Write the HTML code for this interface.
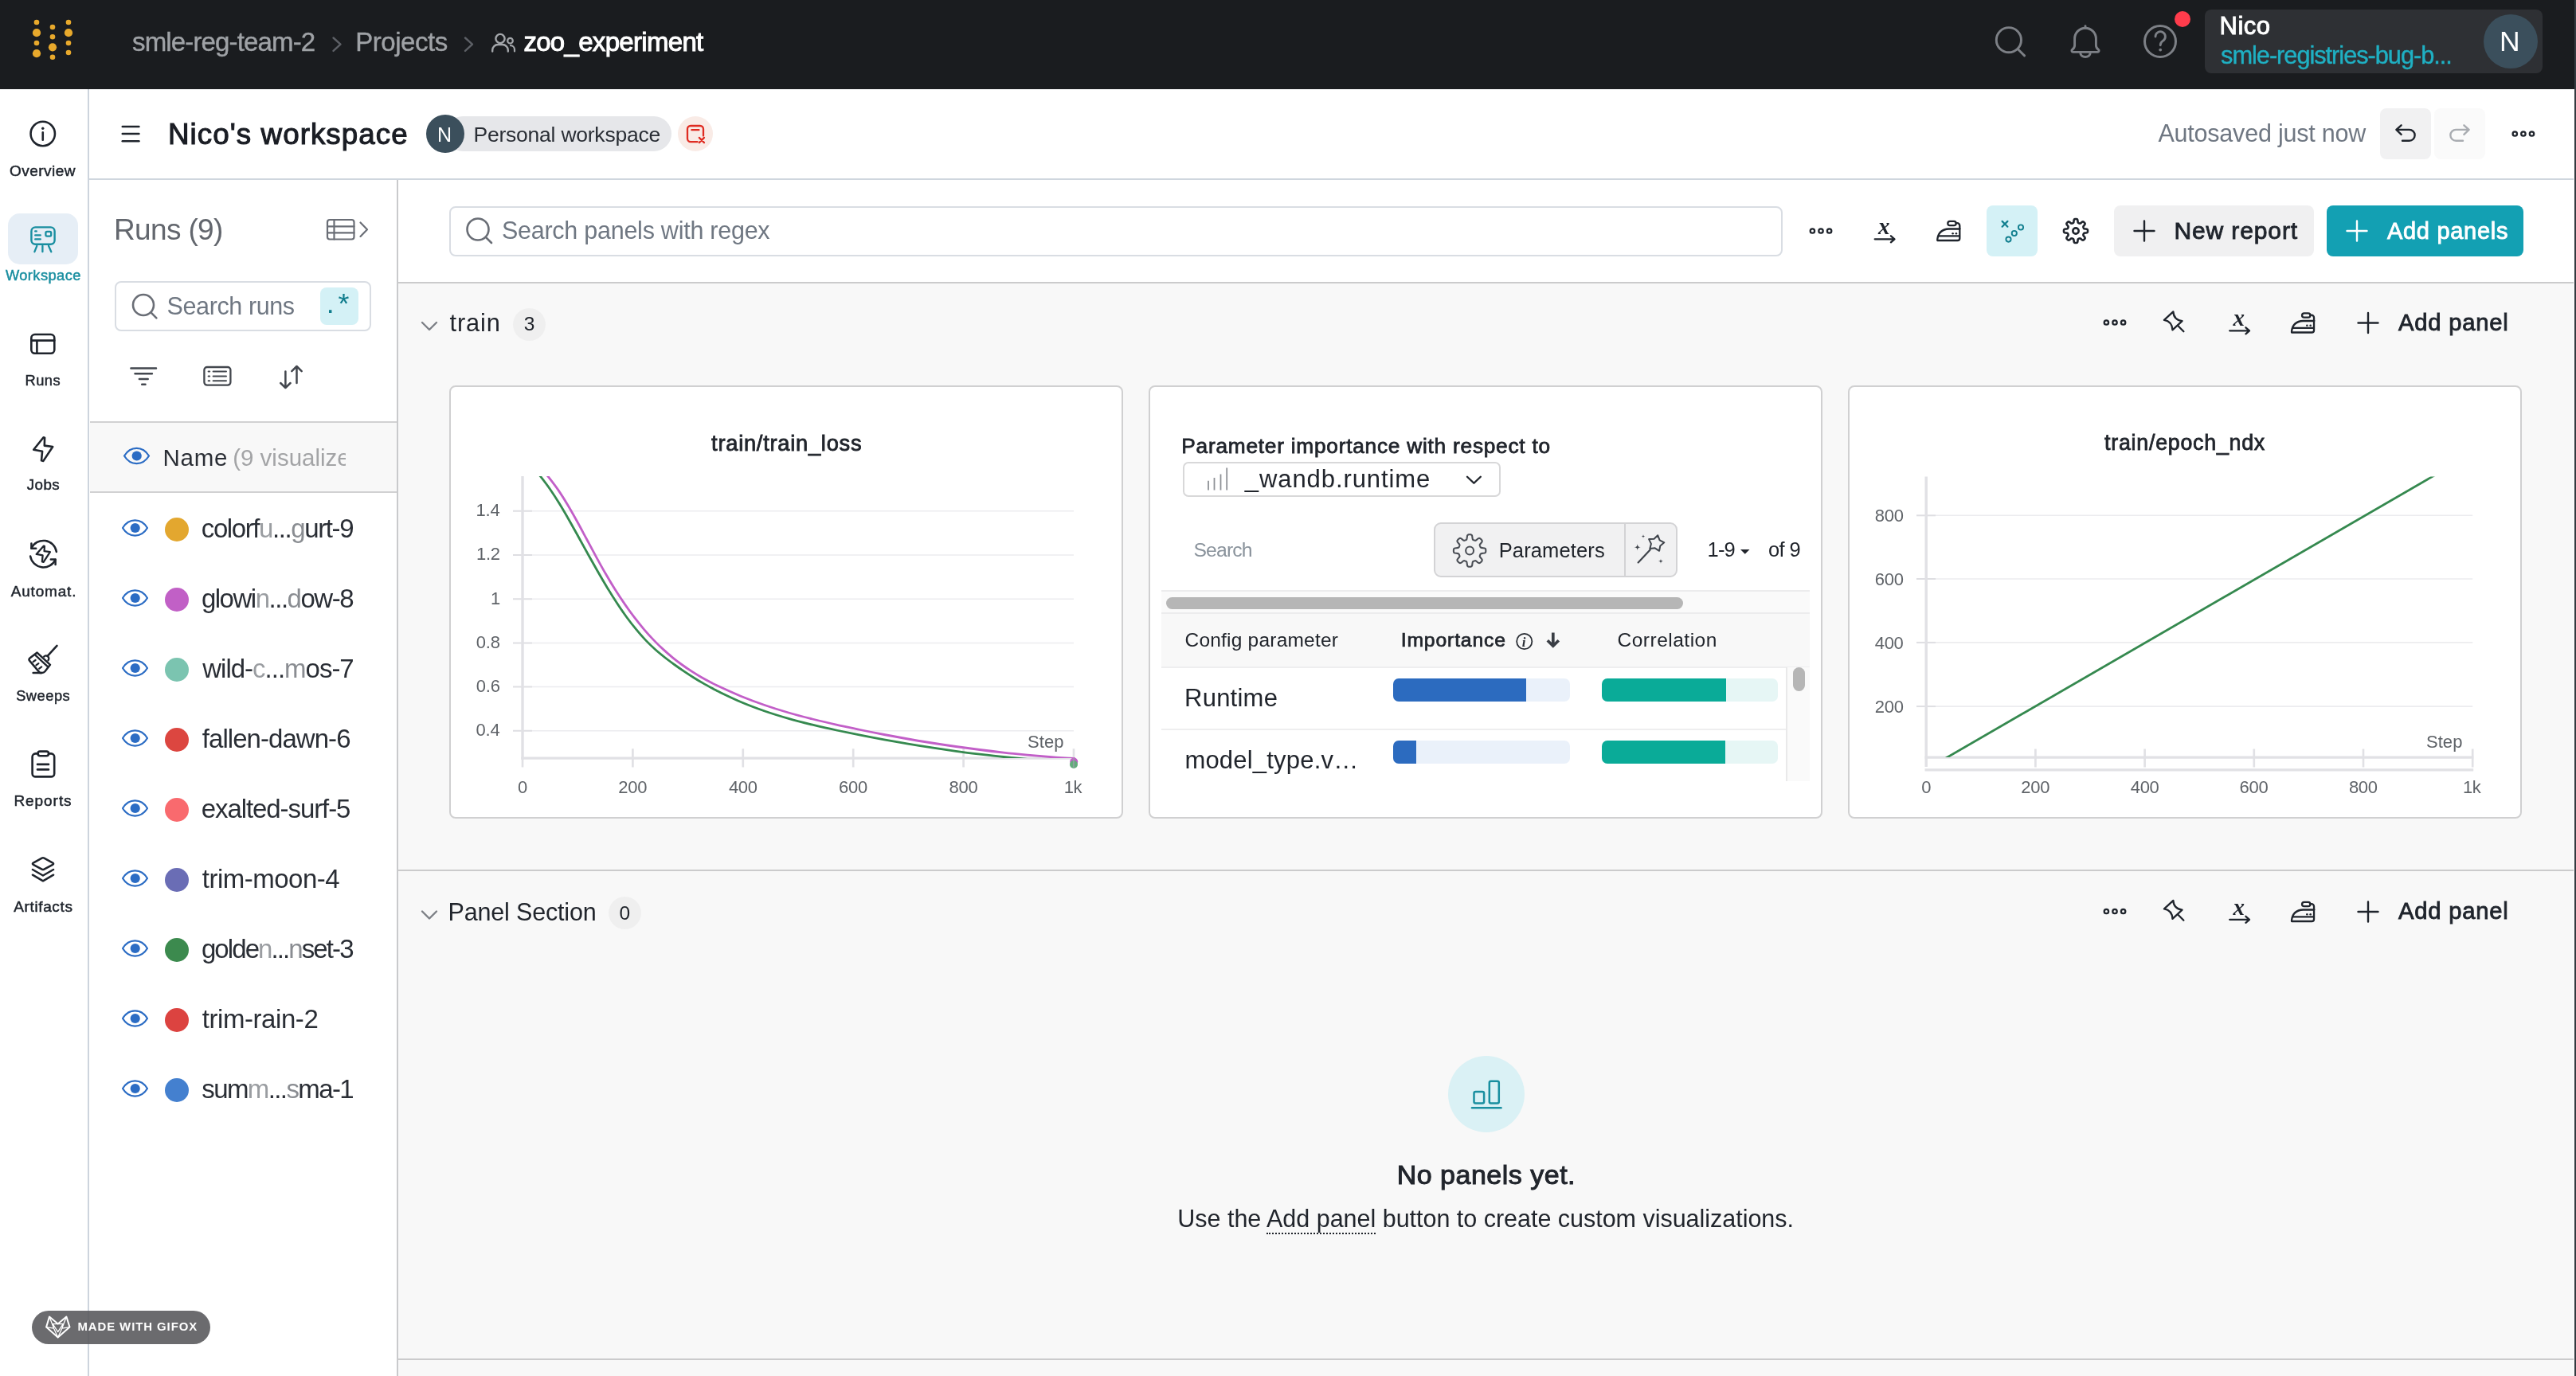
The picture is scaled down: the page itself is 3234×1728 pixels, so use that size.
<!DOCTYPE html>
<html lang="en"><head><meta charset="utf-8"><title>zoo_experiment | Nico's workspace</title>
<style>
html,body{margin:0;padding:0;}
body{width:3234px;height:1728px;position:relative;overflow:hidden;background:#fff;
font-family:"Liberation Sans",sans-serif;color:#21252c;}
.b{position:absolute;box-sizing:border-box;}
.t{position:absolute;white-space:nowrap;line-height:1;}
svg{overflow:visible;}
#root{position:absolute;left:0;top:0;width:3234px;height:1728px;will-change:transform;}
</style></head><body><div id="root">
<div class="b" style="left:0px;top:0px;width:3234px;height:111.5px;background:#1a1c1f;"></div>
<div class="b" style="left:110.3px;top:112px;width:1.6px;height:1616px;background:#cdd4dd;"></div>
<div class="b" style="left:112px;top:224px;width:3119px;height:2px;background:#cfd6de;"></div>
<div class="b" style="left:500px;top:355px;width:2731px;height:1373px;background:#f8f8f8;"></div>
<div class="b" style="left:500px;top:354px;width:2731px;height:2px;background:#cbcbcc;"></div>
<div class="b" style="left:500px;top:1092px;width:2731px;height:2px;background:#cbcbcc;"></div>
<div class="b" style="left:500px;top:1706px;width:2731px;height:2px;background:#cbcbcc;"></div>
<div class="b" style="left:498px;top:226px;width:2px;height:1502px;background:#c9cacc;"></div>
<div class="b" style="left:3232px;top:0px;width:2px;height:1728px;background:#343a40;"></div>
<div class="t" style="left:166.1px;top:35.8px;font-size:33px;color:#9fa2a6;letter-spacing:-0.86px;-webkit-text-stroke:0.4px;">smle-reg-team-2</div>
<div class="t" style="left:446.3px;top:35.8px;font-size:33px;color:#9fa2a6;letter-spacing:-0.47px;-webkit-text-stroke:0.4px;">Projects</div>
<div class="t" style="left:657.4px;top:35.8px;font-size:33px;-webkit-text-stroke:0.99px;color:#ffffff;letter-spacing:-0.69px;">zoo_experiment</div>
<div class="b" style="left:2730px;top:14px;width:20px;height:20px;background:#ff3c4c;border-radius:50%;"></div>
<div class="b" style="left:2768px;top:12px;width:424px;height:80px;background:#2e3034;border-radius:8px;"></div>
<div class="t" style="left:2786.5px;top:16.8px;font-size:31px;-webkit-text-stroke:0.93px;color:#ffffff;letter-spacing:0.53px;">Nico</div>
<div class="t" style="left:2788.1px;top:55.2px;font-size:30.75px;color:#1fb0c3;letter-spacing:-1.03px;-webkit-text-stroke:0.4px;">smle-registries-bug-b...</div>
<div class="b" style="left:3118px;top:18px;width:68px;height:68px;background:#3b4f5c;border-radius:50%;"></div>
<div class="t" style="left:3138.1px;top:35.4px;font-size:35.5px;color:#ffffff;">N</div>
<div class="b" style="left:10px;top:268px;width:88px;height:64px;background:#e6eef6;border-radius:15px;"></div>
<div class="t" style="left:12.1px;top:204.9px;font-size:19.0px;-webkit-text-stroke:0.49px;color:#1f242c;letter-spacing:0.45px;">Overview</div>
<div class="t" style="left:6.9px;top:337.1px;font-size:18.25px;-webkit-text-stroke:0.47px;color:#198ea0;letter-spacing:0.45px;">Workspace</div>
<div class="t" style="left:31.5px;top:469.1px;font-size:18.25px;-webkit-text-stroke:0.47px;color:#1f242c;letter-spacing:0.52px;">Runs</div>
<div class="t" style="left:33.7px;top:600.1px;font-size:18.75px;-webkit-text-stroke:0.49px;color:#1f242c;letter-spacing:0.45px;">Jobs</div>
<div class="t" style="left:13.7px;top:732.7px;font-size:19.0px;-webkit-text-stroke:0.49px;color:#1f242c;letter-spacing:0.82px;">Automat.</div>
<div class="t" style="left:20.2px;top:865.1px;font-size:18.25px;-webkit-text-stroke:0.47px;color:#1f242c;letter-spacing:0.51px;">Sweeps</div>
<div class="t" style="left:17.4px;top:996.4px;font-size:19.0px;-webkit-text-stroke:0.49px;color:#1f242c;letter-spacing:0.95px;">Reports</div>
<div class="t" style="left:17.2px;top:1128.5px;font-size:19.0px;-webkit-text-stroke:0.49px;color:#1f242c;letter-spacing:0.64px;">Artifacts</div>
<div class="t" style="left:211.0px;top:150.6px;font-size:36.75px;-webkit-text-stroke:1.10px;color:#1a1d24;letter-spacing:1.06px;">Nico&#x27;s workspace</div>
<div class="b" style="left:559px;top:146px;width:284px;height:44px;background:#e6e7ea;border-radius:22px;"></div>
<div class="b" style="left:535px;top:144px;width:48px;height:48px;background:#3b4f5c;border-radius:50%;"></div>
<div class="t" style="left:548.9px;top:156.8px;font-size:25px;color:#ffffff;">N</div>
<div class="t" style="left:594.6px;top:156.3px;font-size:26.5px;color:#2a2e35;letter-spacing:-0.24px;">Personal workspace</div>
<div class="b" style="left:851.3px;top:146px;width:44px;height:44px;background:#f9ebe6;border-radius:50%;"></div>
<div class="t" style="left:2709.4px;top:152.2px;font-size:30.5px;color:#6f7782;letter-spacing:-0.21px;">Autosaved just now</div>
<div class="b" style="left:2988px;top:136px;width:64px;height:64px;background:#f1f1f2;border-radius:8px;"></div>
<div class="b" style="left:3056px;top:136px;width:64px;height:64px;background:#fafafa;border-radius:8px;"></div>
<div class="t" style="left:143.0px;top:270.2px;font-size:37px;color:#63676e;letter-spacing:-0.65px;">Runs (9)</div>
<div class="b" style="left:144px;top:353px;width:322px;height:63px;background:#ffffff;border:2px solid #d9dde3;border-radius:8px;"></div>
<div class="t" style="left:209.6px;top:368.7px;font-size:30.5px;color:#6f7782;letter-spacing:-0.40px;">Search runs</div>
<div class="b" style="left:402px;top:360.5px;width:47.5px;height:47px;background:#d4f1f6;border-radius:8px;"></div>
<div class="t" style="left:409.7px;top:363.7px;font-size:35.75px;color:#117d8d;letter-spacing:4.98px;">.*</div>
<div class="b" style="left:113px;top:529px;width:385px;height:90px;background:#f8f8f8;border-top:2px solid #d1d1d2;border-bottom:2px solid #d1d1d2;"></div>
<div class="t" style="left:204.6px;top:559.5px;font-size:29.5px;color:#2a2e35;letter-spacing:0.68px;">Name</div>
<div class="b" style="left:290px;top:545px;width:144px;height:60px;overflow:hidden;"><div class="t" style="left:2.2px;top:14.5px;font-size:29.5px;color:#a3a4a6;">(9 visualized)</div>
</div>
<div class="b" style="left:207px;top:650px;width:30px;height:30px;background:#e3a72f;border-radius:50%;"></div>
<div class="t" style="left:252.8px;top:647.1px;font-size:33px;color:#2a2e35;letter-spacing:-1.40px;">colorf<span style="color:#9a9da1">u</span>...<span style="color:#8a8d92">g</span>urt-9</div>
<div class="b" style="left:207px;top:738px;width:30px;height:30px;background:#c160c6;border-radius:50%;"></div>
<div class="t" style="left:252.9px;top:735.1px;font-size:33px;color:#2a2e35;letter-spacing:-1.49px;">glowi<span style="color:#9a9da1">n</span>...<span style="color:#8a8d92">d</span>ow-8</div>
<div class="b" style="left:207px;top:826px;width:30px;height:30px;background:#7bc4b0;border-radius:50%;"></div>
<div class="t" style="left:254.3px;top:823.1px;font-size:33px;color:#2a2e35;letter-spacing:-1.01px;">wild-<span style="color:#9a9da1">c</span>...<span style="color:#8a8d92">m</span>os-7</div>
<div class="b" style="left:207px;top:914px;width:30px;height:30px;background:#dc4640;border-radius:50%;"></div>
<div class="t" style="left:253.8px;top:911.1px;font-size:33px;color:#2a2e35;letter-spacing:-0.95px;">fallen-dawn-6</div>
<div class="b" style="left:207px;top:1002px;width:30px;height:30px;background:#f96a6e;border-radius:50%;"></div>
<div class="t" style="left:252.8px;top:999.1px;font-size:33px;color:#2a2e35;letter-spacing:-1.09px;">exalted-surf-5</div>
<div class="b" style="left:207px;top:1090px;width:30px;height:30px;background:#6a6db5;border-radius:50%;"></div>
<div class="t" style="left:253.8px;top:1087.1px;font-size:33px;color:#2a2e35;letter-spacing:-0.51px;">trim-moon-4</div>
<div class="b" style="left:207px;top:1178px;width:30px;height:30px;background:#3c8a4e;border-radius:50%;"></div>
<div class="t" style="left:252.9px;top:1175.1px;font-size:33px;color:#2a2e35;letter-spacing:-1.91px;">golde<span style="color:#9a9da1">n</span>...<span style="color:#8a8d92">n</span>set-3</div>
<div class="b" style="left:207px;top:1266px;width:30px;height:30px;background:#dc4340;border-radius:50%;"></div>
<div class="t" style="left:253.8px;top:1263.1px;font-size:33px;color:#2a2e35;letter-spacing:-0.44px;">trim-rain-2</div>
<div class="b" style="left:207px;top:1354px;width:30px;height:30px;background:#4480cf;border-radius:50%;"></div>
<div class="t" style="left:253.3px;top:1351.1px;font-size:33px;color:#2a2e35;letter-spacing:-1.61px;">sum<span style="color:#9a9da1">m</span>...<span style="color:#8a8d92">s</span>ma-1</div>
<div class="b" style="left:564px;top:259px;width:1674px;height:63px;background:#ffffff;border:2px solid #d9dde3;border-radius:8px;"></div>
<div class="t" style="left:629.9px;top:274.2px;font-size:30.5px;color:#6f7782;letter-spacing:-0.25px;">Search panels with regex</div>
<div class="b" style="left:2494px;top:258px;width:64px;height:64px;background:#d4f1f6;border-radius:8px;"></div>
<div class="b" style="left:2654px;top:258px;width:251px;height:64px;background:#f0f0f1;border-radius:8px;"></div>
<div class="t" style="left:2729.5px;top:274.6px;font-size:30.0px;-webkit-text-stroke:0.90px;color:#1f242c;letter-spacing:0.88px;">New report</div>
<div class="b" style="left:2921px;top:258px;width:247px;height:64px;background:#13a0b3;border-radius:8px;"></div>
<div class="t" style="left:2996.9px;top:275.5px;font-size:29px;-webkit-text-stroke:0.87px;color:#ffffff;letter-spacing:0.72px;">Add panels</div>
<div class="t" style="left:564.5px;top:390.6px;font-size:30.75px;color:#21252c;letter-spacing:0.91px;">train</div>
<div class="b" style="left:644.25px;top:386.5px;width:41px;height:41px;background:#efefef;border-radius:50%;"></div>
<div class="t" style="left:657.8px;top:395.3px;font-size:24.5px;color:#21252c;">3</div>
<div class="t" style="left:3010.9px;top:390.7px;font-size:29.25px;-webkit-text-stroke:0.88px;color:#1f242c;letter-spacing:0.78px;">Add panel</div>
<div class="t" style="left:562.5px;top:1130.3px;font-size:30.5px;color:#21252c;letter-spacing:-0.17px;">Panel Section</div>
<div class="b" style="left:764.1px;top:1126.0px;width:41px;height:41px;background:#efefef;border-radius:50%;"></div>
<div class="t" style="left:777.6px;top:1134.8px;font-size:24.5px;color:#21252c;">0</div>
<div class="t" style="left:3010.9px;top:1130.2px;font-size:29.25px;-webkit-text-stroke:0.88px;color:#1f242c;letter-spacing:0.78px;">Add panel</div>
<div class="b" style="left:564px;top:484px;width:846px;height:544px;background:#ffffff;border:2px solid #d0d0d1;border-radius:8px;"></div>
<div class="b" style="left:1442px;top:484px;width:846px;height:544px;background:#ffffff;border:2px solid #d0d0d1;border-radius:8px;"></div>
<div class="b" style="left:2320px;top:484px;width:846px;height:544px;background:#ffffff;border:2px solid #d0d0d1;border-radius:8px;"></div>
<div class="t" style="left:893.1px;top:542.9px;font-size:27.25px;-webkit-text-stroke:0.82px;color:#21252c;letter-spacing:0.75px;">train/train_loss</div>
<div class="t" style="left:597.5px;top:630.1px;font-size:22px;color:#5f6368;letter-spacing:-0.21px;">1.4</div>
<div class="t" style="left:597.9px;top:685.4px;font-size:22px;color:#5f6368;letter-spacing:-0.21px;">1.2</div>
<div class="t" style="left:616.0px;top:740.6px;font-size:22px;color:#5f6368;">1</div>
<div class="t" style="left:597.8px;top:795.9px;font-size:22px;color:#5f6368;letter-spacing:-0.22px;">0.8</div>
<div class="t" style="left:597.8px;top:850.9px;font-size:22px;color:#5f6368;letter-spacing:-0.22px;">0.6</div>
<div class="t" style="left:597.5px;top:906.1px;font-size:22px;color:#5f6368;letter-spacing:-0.22px;">0.4</div>
<div class="t" style="left:650.0px;top:978.3px;font-size:22px;color:#5f6368;">0</div>
<div class="t" style="left:776.2px;top:978.3px;font-size:22px;color:#5f6368;letter-spacing:-0.26px;">200</div>
<div class="t" style="left:914.9px;top:978.3px;font-size:22px;color:#5f6368;letter-spacing:-0.27px;">400</div>
<div class="t" style="left:1053.0px;top:978.3px;font-size:22px;color:#5f6368;letter-spacing:-0.26px;">600</div>
<div class="t" style="left:1191.5px;top:978.3px;font-size:22px;color:#5f6368;letter-spacing:-0.26px;">800</div>
<div class="t" style="left:1335.7px;top:978.3px;font-size:22px;color:#5f6368;letter-spacing:-0.32px;">1k</div>
<div class="t" style="left:1290.0px;top:921.4px;font-size:22px;color:#5f6368;letter-spacing:0.09px;">Step</div>
<div class="t" style="left:2642.1px;top:543.4px;font-size:26.75px;-webkit-text-stroke:0.80px;color:#21252c;letter-spacing:0.77px;">train/epoch_ndx</div>
<div class="t" style="left:2353.7px;top:636.9px;font-size:22px;color:#5f6368;letter-spacing:-0.26px;">800</div>
<div class="t" style="left:2353.7px;top:716.6px;font-size:22px;color:#5f6368;letter-spacing:-0.26px;">600</div>
<div class="t" style="left:2353.7px;top:796.5px;font-size:22px;color:#5f6368;letter-spacing:-0.27px;">400</div>
<div class="t" style="left:2353.7px;top:876.7px;font-size:22px;color:#5f6368;letter-spacing:-0.26px;">200</div>
<div class="t" style="left:2412.2px;top:978.4px;font-size:22px;color:#5f6368;">0</div>
<div class="t" style="left:2537.2px;top:978.4px;font-size:22px;color:#5f6368;letter-spacing:-0.26px;">200</div>
<div class="t" style="left:2674.7px;top:978.4px;font-size:22px;color:#5f6368;letter-spacing:-0.27px;">400</div>
<div class="t" style="left:2811.6px;top:978.4px;font-size:22px;color:#5f6368;letter-spacing:-0.26px;">600</div>
<div class="t" style="left:2948.9px;top:978.4px;font-size:22px;color:#5f6368;letter-spacing:-0.26px;">800</div>
<div class="t" style="left:3091.9px;top:978.4px;font-size:22px;color:#5f6368;letter-spacing:-0.32px;">1k</div>
<div class="t" style="left:3045.9px;top:921.2px;font-size:22px;color:#5f6368;letter-spacing:0.09px;">Step</div>
<div class="t" style="left:1483.3px;top:547.3px;font-size:26.25px;-webkit-text-stroke:0.79px;color:#21252c;letter-spacing:0.76px;">Parameter importance with respect to</div>
<div class="b" style="left:1484.5px;top:580px;width:399px;height:43.5px;background:#ffffff;border:2px solid #d8d8d9;border-radius:7px;"></div>
<div class="t" style="left:1562.8px;top:585.6px;font-size:31.0px;color:#21252c;letter-spacing:0.92px;">_wandb.runtime</div>
<div class="t" style="left:1498.4px;top:679.0px;font-size:24.75px;color:#8a939c;letter-spacing:-0.84px;">Search</div>
<div class="b" style="left:1800px;top:656px;width:306px;height:68.5px;background:#f1f1f2;border:2px solid #d3d3d5;border-radius:9px;"></div>
<div class="b" style="left:2039px;top:658px;width:2px;height:64.5px;background:#d3d3d5;"></div>
<div class="t" style="left:1881.7px;top:678.9px;font-size:25.5px;color:#21252c;letter-spacing:0.14px;">Parameters</div>
<div class="t" style="left:2143.6px;top:677.9px;font-size:25.5px;color:#21252c;letter-spacing:-0.85px;">1-9</div>
<svg class="b" style="left:2184.5px;top:690px;" width="12" height="6" viewBox="0 0 12 6" fill="none"><path d="M0 0H11.5L5.75 5.8Z" fill="#21252c"/></svg>
<div class="t" style="left:2219.9px;top:677.9px;font-size:25.5px;color:#21252c;letter-spacing:-0.58px;">of 9</div>
<div class="b" style="left:1458px;top:741px;width:814px;height:2px;background:#ececed;"></div>
<div class="b" style="left:1458px;top:743px;width:814px;height:26px;background:#fafafa;"></div>
<div class="b" style="left:1464px;top:749.5px;width:648.5px;height:15px;background:#b6b6b6;border-radius:8px;"></div>
<div class="b" style="left:1458px;top:769px;width:814px;height:2px;background:#ececed;"></div>
<div class="b" style="left:1458px;top:771px;width:814px;height:66px;background:#f8f8f8;"></div>
<div class="t" style="left:1487.5px;top:792.3px;font-size:24.5px;color:#21252c;letter-spacing:0.21px;">Config parameter</div>
<div class="t" style="left:1758.7px;top:791.8px;font-size:24.75px;-webkit-text-stroke:0.74px;color:#21252c;letter-spacing:0.84px;">Importance</div>
<div class="t" style="left:2030.5px;top:792.3px;font-size:24.5px;color:#21252c;letter-spacing:0.50px;">Correlation</div>
<div class="b" style="left:1458px;top:837px;width:814px;height:2px;background:#eeeeef;"></div>
<div class="b" style="left:1458px;top:914.5px;width:785px;height:2px;background:#eeeeef;"></div>
<div class="t" style="left:1487.0px;top:860.8px;font-size:31px;color:#21252c;letter-spacing:0.25px;">Runtime</div>
<div class="t" style="left:1487.4px;top:938.8px;font-size:31px;color:#21252c;letter-spacing:0.20px;">model_type.v…</div>
<div class="b" style="left:1749px;top:852px;width:222px;height:29px;background:#eaf1fa;border-radius:7px;overflow:hidden;"><div class="b" style="left:0px;top:0px;width:167px;height:29px;background:#2c6bbf;"></div>
</div>
<div class="b" style="left:2011px;top:852px;width:221px;height:29px;background:#e6f6f5;border-radius:7px;overflow:hidden;"><div class="b" style="left:0px;top:0px;width:156px;height:29px;background:#0aab98;"></div>
</div>
<div class="b" style="left:1749px;top:930px;width:222px;height:29px;background:#eaf1fa;border-radius:7px;overflow:hidden;"><div class="b" style="left:0px;top:0px;width:29px;height:29px;background:#2c6bbf;"></div>
</div>
<div class="b" style="left:2011px;top:930px;width:221px;height:29px;background:#e6f6f5;border-radius:7px;overflow:hidden;"><div class="b" style="left:0px;top:0px;width:155px;height:29px;background:#0aab98;"></div>
</div>
<div class="b" style="left:2242px;top:838px;width:30px;height:143px;background:#fafafa;border-left:2px solid #e9e9ea;"></div>
<div class="b" style="left:2250.5px;top:838px;width:15px;height:29.5px;background:#b6b6b6;border-radius:8px;"></div>
<div class="b" style="left:1818px;top:1326px;width:96px;height:96px;background:#daf1f5;border-radius:50%;"></div>
<div class="t" style="left:1753.7px;top:1457.8px;font-size:34px;-webkit-text-stroke:1.02px;color:#21252c;letter-spacing:0.50px;">No panels yet.</div>
<div class="t" style="left:1478.3px;top:1515.2px;font-size:30.5px;color:#21252c;letter-spacing:-0.02px;">Use the <span style="border-bottom:2px dotted #21252c;padding-bottom:1px">Add panel</span> button to create custom visualizations.</div>
<div class="b" style="left:40px;top:1646.2px;width:224px;height:41.7px;background:rgba(86,87,90,0.88);border-radius:21px;"></div>
<div class="t" style="left:97.4px;top:1659.4px;font-size:14.95px;font-weight:700;color:#ffffff;letter-spacing:0.92px;">MADE WITH GIFOX</div>
<svg class="b" style="left:0;top:0" width="3234" height="1728" viewBox="0 0 3234 1728" fill="none"><circle cx="46" cy="28" r="3.3" fill="#e8a92c"/><circle cx="46" cy="41.2" r="5.1" fill="#e8a92c"/><circle cx="46" cy="54" r="3.3" fill="#e8a92c"/><circle cx="46" cy="67.2" r="5.1" fill="#e8a92c"/><circle cx="66" cy="34" r="3.3" fill="#e8a92c"/><circle cx="66" cy="46.2" r="3.3" fill="#e8a92c"/><circle cx="66" cy="59.3" r="5.1" fill="#e8a92c"/><circle cx="66" cy="71.7" r="3.3" fill="#e8a92c"/><circle cx="86" cy="28" r="3.3" fill="#e8a92c"/><circle cx="86" cy="41.2" r="5.1" fill="#e8a92c"/><circle cx="86" cy="54" r="3.3" fill="#e8a92c"/><circle cx="86" cy="66" r="3.3" fill="#e8a92c"/>
<path d="M418.5 47.5l9 8.2l-9 8.2" stroke="#5d6066" stroke-width="2.4" stroke-linecap="round" stroke-linejoin="round" fill="none" />
<path d="M584 47.5l9 8.2l-9 8.2" stroke="#5d6066" stroke-width="2.4" stroke-linecap="round" stroke-linejoin="round" fill="none" />
<circle cx="628" cy="48.5" r="5.6" stroke="#a4a7ab" stroke-width="2.4" stroke-linecap="round" stroke-linejoin="round" fill="none" /><path d="M618.2 64.5v-1.5a7 7 0 0 1 7 -7h5.6a7 7 0 0 1 7 7v1.5" stroke="#a4a7ab" stroke-width="2.4" stroke-linecap="round" stroke-linejoin="round" fill="none" /><circle cx="640.5" cy="51.2" r="3.3" stroke="#a4a7ab" stroke-width="2.2" stroke-linecap="round" stroke-linejoin="round" fill="none" /><path d="M641 57.2a5 5 0 0 1 5 5v2.3" stroke="#a4a7ab" stroke-width="2.2" stroke-linecap="round" stroke-linejoin="round" fill="none" />
<circle cx="2521.9" cy="50.2" r="15.6" stroke="#7d8086" stroke-width="2.9" stroke-linecap="round" stroke-linejoin="round" fill="none" /><path d="M2533.43076 61.730760000000004L2541.556 69.856" stroke="#7d8086" stroke-width="2.9" stroke-linecap="round" stroke-linejoin="round" fill="none" />
<g transform="translate(0 0)"><path d="M2604.6 57V48.6a13.4 13.4 0 0 1 26.8 0V57c0 2.5 1.2 4 3.1 5.4a1.7 1.7 0 0 1 -1.1 3H2602.6a1.7 1.7 0 0 1 -1.1 -3c1.9 -1.4 3.1 -2.9 3.1 -5.4Z" stroke="#7d8086" stroke-width="2.9" stroke-linecap="round" stroke-linejoin="round" fill="none" /><path d="M2611.8 66.6a6.2 4.9 0 0 0 12.4 0" stroke="#7d8086" stroke-width="2.9" stroke-linecap="round" stroke-linejoin="round" fill="none" /><path d="M2618 32.8v2.2" stroke="#7d8086" stroke-width="2.9" stroke-linecap="round" stroke-linejoin="round" fill="none" /></g>
<circle cx="2712" cy="52" r="19.5" stroke="#7d8086" stroke-width="3" stroke-linecap="round" stroke-linejoin="round" fill="none" /><path d="M2706 46a6.2 6.2 0 1 1 9.5 5.2c-2.3 1.6 -3.3 2.9 -3.3 5.6" stroke="#7d8086" stroke-width="2.8" stroke-linecap="round" stroke-linejoin="round" fill="none" /><circle cx="2712.2" cy="62.6" r="1.9" fill="#7d8086"/>
<circle cx="53.75" cy="168" r="15.2" stroke="#1f242c" stroke-width="2.6" stroke-linecap="round" stroke-linejoin="round" fill="none" /><circle cx="53.75" cy="161.2" r="1.7" fill="#1f242c"/><path d="M53.75 166.4v9.4" stroke="#1f242c" stroke-width="2.6" stroke-linecap="round" stroke-linejoin="round" fill="none" /><rect x="39.4" y="285.4" width="29.2" height="21.4" rx="5" stroke="#198ea0" stroke-width="2.4" stroke-linecap="round" stroke-linejoin="round" fill="none" /><path d="M44.2 290.4h1.6M44.2 295.4h6.6M44.2 300.4h6.6" stroke="#198ea0" stroke-width="2.3" stroke-linecap="round" stroke-linejoin="round" fill="none" /><rect x="57.4" y="290.9" width="6.8" height="5.8" rx="1.6" stroke="#198ea0" stroke-width="2.3" stroke-linecap="round" stroke-linejoin="round" fill="none" /><path d="M46.3 308.8l-2.9 7.4M53.4 308.8v7.4M61 308.8l3.3 7.4" stroke="#198ea0" stroke-width="2.3" stroke-linecap="round" stroke-linejoin="round" fill="none" /><rect x="39.3" y="420" width="29" height="23.8" rx="4.5" stroke="#1f242c" stroke-width="2.6" stroke-linecap="round" stroke-linejoin="round" fill="none" /><path d="M39.3 427.6h29M46.4 427.6v16" stroke="#1f242c" stroke-width="2.6" stroke-linecap="round" stroke-linejoin="round" fill="none" /><path d="M54.6 549.3L56.1 549.7L55.8 559.6L66.2 561L54.4 578.9L52 578.3L53.1 566.7L42.2 564.7Z" stroke="#1f242c" stroke-width="2.6" stroke-linecap="round" stroke-linejoin="round" fill="none" /><path d="M39.4 688.6A16.6 16.6 0 0 1 70.9 693M69.6 702.8A16.6 16.6 0 0 1 38.1 698.4" stroke="#1f242c" stroke-width="2.5" stroke-linecap="round" stroke-linejoin="round" fill="none" /><path d="M39.4 682.4V688.8H45.2M69.6 709V702.6H63.8" stroke="#1f242c" stroke-width="2.5" stroke-linecap="round" stroke-linejoin="round" fill="none" /><path d="M54.9 685.6L55.9 685.9L55.6 692.2L62.9 693.2L54.6 705.8L52.9 705.4L53.6 697.3L45.7 695.9Z" stroke="#1f242c" stroke-width="2.3" stroke-linecap="round" stroke-linejoin="round" fill="none" /><path d="M71.5 810.9L59.6 823.8" stroke="#1f242c" stroke-width="2.6" stroke-linecap="round" stroke-linejoin="round" fill="none" /><path d="M55.2 824.6a3.4 3.4 0 0 1 5.2 4.8" stroke="#1f242c" stroke-width="2.3" stroke-linecap="round" stroke-linejoin="round" fill="none" /><path d="M46.6 819.6L63 834.8L56.4 843.2Q55 844.9 52.6 844.9L50 844.9L37 829.6Q35.8 828 37.4 826.6Z" stroke="#1f242c" stroke-width="2.5" stroke-linecap="round" stroke-linejoin="round" fill="none" /><path d="M41.6 845H52" stroke="#1f242c" stroke-width="2.5" stroke-linecap="round" stroke-linejoin="round" fill="none" /><path d="M44.2 822.6L60.4 837.6" stroke="#1f242c" stroke-width="2.3" stroke-linecap="round" stroke-linejoin="round" fill="none" /><path d="M41.6 831.2l3 -2.2M45.4 835.4l3 -2.2M49.2 839.6l3 -2.2" stroke="#1f242c" stroke-width="2.2" stroke-linecap="round" stroke-linejoin="round" fill="none" /><path d="M47.4 946.4h-2.8a4 4 0 0 0 -4 4v21a4 4 0 0 0 4 4h19.6a4 4 0 0 0 4 -4v-21a4 4 0 0 0 -4 -4h-2.8" stroke="#1f242c" stroke-width="2.6" stroke-linecap="round" stroke-linejoin="round" fill="none" /><rect x="47.6" y="943.6" width="13.4" height="5.6" rx="2.6" stroke="#1f242c" stroke-width="2.6" stroke-linecap="round" stroke-linejoin="round" fill="none" /><path d="M47 959.9h14M47 966.4h14" stroke="#1f242c" stroke-width="2.6" stroke-linecap="round" stroke-linejoin="round" fill="none" /><path d="M52.6 1077.6Q54 1076.8 55.4 1077.6L66.2 1083.6Q68 1084.7 66.2 1085.8L55.4 1091.6Q54 1092.4 52.6 1091.6L41.8 1085.8Q40 1084.7 41.8 1083.6Z" stroke="#1f242c" stroke-width="2.5" stroke-linecap="round" stroke-linejoin="round" fill="none" /><path d="M40.9 1092L54 1099.5L67.1 1092M40.9 1098.7L54 1106.3L67.1 1098.7" stroke="#1f242c" stroke-width="2.5" stroke-linecap="round" stroke-linejoin="round" fill="none" />
<path d="M153.7 159h20.8" stroke="#1f242c" stroke-width="2.4" stroke-linecap="round" stroke-linejoin="round" fill="none" /><path d="M153.7 168h20.8" stroke="#1f242c" stroke-width="2.4" stroke-linecap="round" stroke-linejoin="round" fill="none" /><path d="M153.7 177.2h20.8" stroke="#1f242c" stroke-width="2.4" stroke-linecap="round" stroke-linejoin="round" fill="none" />
<path d="M875.6 178.1H867a4 4 0 0 1 -4 -4V162a4 4 0 0 1 4 -4H879a4 4 0 0 1 4 4V170.6" stroke="#df2c22" stroke-width="2.3" stroke-linecap="round" stroke-linejoin="round" fill="none" /><path d="M868.3 163.2H877.5" stroke="#df2c22" stroke-width="2.2" stroke-linecap="round" stroke-linejoin="round" fill="none" /><path d="M877.8 172.9l6.2 6.2m0 -6.2l-6.2 6.2" stroke="#df2c22" stroke-width="2.2" stroke-linecap="round" stroke-linejoin="round" fill="none" />
<path d="M3014.6 157.3L3008.4 162.9L3014.6 168.9M3008.6 162.9H3024.7a6.95 6.95 0 0 1 0 13.9H3016" transform="translate(0.00 0.00)" stroke="#1f242c" stroke-width="2.4" stroke-linecap="round" stroke-linejoin="round" fill="none" />
<path d="M3014.6 157.3L3008.4 162.9L3014.6 168.9M3008.6 162.9H3024.7a6.95 6.95 0 0 1 0 13.9H3016" transform="translate(6108.00 0.00) scale(-1 1)" stroke="#a9acb1" stroke-width="2.4" stroke-linecap="round" stroke-linejoin="round" fill="none" />
<circle cx="3157.3" cy="168" r="2.7" stroke="#1f242c" stroke-width="2.3" stroke-linecap="round" stroke-linejoin="round" fill="none" /><circle cx="3167.9" cy="168" r="2.7" stroke="#1f242c" stroke-width="2.3" stroke-linecap="round" stroke-linejoin="round" fill="none" /><circle cx="3178.5" cy="168" r="2.7" stroke="#1f242c" stroke-width="2.3" stroke-linecap="round" stroke-linejoin="round" fill="none" />
<rect x="411" y="276" width="33.5" height="24.5" rx="3" stroke="#6a6e76" stroke-width="2.2" stroke-linecap="round" stroke-linejoin="round" fill="none" /><path d="M411 284.3h33.5M411 292.4h33.5M419.5 276v24.5" stroke="#6a6e76" stroke-width="2.2" stroke-linecap="round" stroke-linejoin="round" fill="none" /><path d="M452.5 279.5l8.5 8.7l-8.5 8.7" stroke="#6a6e76" stroke-width="2.2" stroke-linecap="round" stroke-linejoin="round" fill="none" />
<circle cx="180" cy="383" r="13" stroke="#6a6e76" stroke-width="2.6" stroke-linecap="round" stroke-linejoin="round" fill="none" /><path d="M189.6923 392.6923L196.38 399.38" stroke="#6a6e76" stroke-width="2.6" stroke-linecap="round" stroke-linejoin="round" fill="none" />
<path d="M164.4 462.4H196M169.5 469.2H190.9M174.9 475.9H185.7M178.2 482.7H182.5" stroke="#43474e" stroke-width="2.5" stroke-linecap="round" stroke-linejoin="round" fill="none" />
<rect x="256.4" y="461" width="33" height="22.7" rx="3.6" stroke="#43474e" stroke-width="2.3" stroke-linecap="round" stroke-linejoin="round" fill="none" /><path d="M261.6 466.6h1.6M267.6 466.6h16.4" stroke="#43474e" stroke-width="2" stroke-linecap="round" stroke-linejoin="round" fill="none" /><path d="M261.6 472.4h1.6M267.6 472.4h16.4" stroke="#43474e" stroke-width="2" stroke-linecap="round" stroke-linejoin="round" fill="none" /><path d="M261.6 478.2h1.6M267.6 478.2h16.4" stroke="#43474e" stroke-width="2" stroke-linecap="round" stroke-linejoin="round" fill="none" />
<path d="M358.4 466.4V486.6M352.2 481L358.4 487L364.6 481" stroke="#43474e" stroke-width="2.5" stroke-linecap="round" stroke-linejoin="round" fill="none" /><path d="M372.5 481V460.2M366.3 466.2L372.5 460L378.7 466.2" stroke="#43474e" stroke-width="2.5" stroke-linecap="round" stroke-linejoin="round" fill="none" />
<path d="M156.0 572.5c4 -6.6 9.4 -9.6 15.5 -9.6s11.5 3 15.5 9.6c-4 6.6 -9.4 9.6 -15.5 9.6s-11.5 -3 -15.5 -9.6z" stroke="#2b6cc4" stroke-width="2.2" stroke-linecap="round" stroke-linejoin="round" fill="none" /><circle cx="171.7" cy="572.5" r="6.1" fill="#2b6cc4"/>
<path d="M154.0 663c4 -6.6 9.4 -9.6 15.5 -9.6s11.5 3 15.5 9.6c-4 6.6 -9.4 9.6 -15.5 9.6s-11.5 -3 -15.5 -9.6z" stroke="#2b6cc4" stroke-width="2.2" stroke-linecap="round" stroke-linejoin="round" fill="none" /><circle cx="169.7" cy="663" r="6.1" fill="#2b6cc4"/>
<path d="M154.0 751c4 -6.6 9.4 -9.6 15.5 -9.6s11.5 3 15.5 9.6c-4 6.6 -9.4 9.6 -15.5 9.6s-11.5 -3 -15.5 -9.6z" stroke="#2b6cc4" stroke-width="2.2" stroke-linecap="round" stroke-linejoin="round" fill="none" /><circle cx="169.7" cy="751" r="6.1" fill="#2b6cc4"/>
<path d="M154.0 839c4 -6.6 9.4 -9.6 15.5 -9.6s11.5 3 15.5 9.6c-4 6.6 -9.4 9.6 -15.5 9.6s-11.5 -3 -15.5 -9.6z" stroke="#2b6cc4" stroke-width="2.2" stroke-linecap="round" stroke-linejoin="round" fill="none" /><circle cx="169.7" cy="839" r="6.1" fill="#2b6cc4"/>
<path d="M154.0 927c4 -6.6 9.4 -9.6 15.5 -9.6s11.5 3 15.5 9.6c-4 6.6 -9.4 9.6 -15.5 9.6s-11.5 -3 -15.5 -9.6z" stroke="#2b6cc4" stroke-width="2.2" stroke-linecap="round" stroke-linejoin="round" fill="none" /><circle cx="169.7" cy="927" r="6.1" fill="#2b6cc4"/>
<path d="M154.0 1015c4 -6.6 9.4 -9.6 15.5 -9.6s11.5 3 15.5 9.6c-4 6.6 -9.4 9.6 -15.5 9.6s-11.5 -3 -15.5 -9.6z" stroke="#2b6cc4" stroke-width="2.2" stroke-linecap="round" stroke-linejoin="round" fill="none" /><circle cx="169.7" cy="1015" r="6.1" fill="#2b6cc4"/>
<path d="M154.0 1103c4 -6.6 9.4 -9.6 15.5 -9.6s11.5 3 15.5 9.6c-4 6.6 -9.4 9.6 -15.5 9.6s-11.5 -3 -15.5 -9.6z" stroke="#2b6cc4" stroke-width="2.2" stroke-linecap="round" stroke-linejoin="round" fill="none" /><circle cx="169.7" cy="1103" r="6.1" fill="#2b6cc4"/>
<path d="M154.0 1191c4 -6.6 9.4 -9.6 15.5 -9.6s11.5 3 15.5 9.6c-4 6.6 -9.4 9.6 -15.5 9.6s-11.5 -3 -15.5 -9.6z" stroke="#2b6cc4" stroke-width="2.2" stroke-linecap="round" stroke-linejoin="round" fill="none" /><circle cx="169.7" cy="1191" r="6.1" fill="#2b6cc4"/>
<path d="M154.0 1279c4 -6.6 9.4 -9.6 15.5 -9.6s11.5 3 15.5 9.6c-4 6.6 -9.4 9.6 -15.5 9.6s-11.5 -3 -15.5 -9.6z" stroke="#2b6cc4" stroke-width="2.2" stroke-linecap="round" stroke-linejoin="round" fill="none" /><circle cx="169.7" cy="1279" r="6.1" fill="#2b6cc4"/>
<path d="M154.0 1367c4 -6.6 9.4 -9.6 15.5 -9.6s11.5 3 15.5 9.6c-4 6.6 -9.4 9.6 -15.5 9.6s-11.5 -3 -15.5 -9.6z" stroke="#2b6cc4" stroke-width="2.2" stroke-linecap="round" stroke-linejoin="round" fill="none" /><circle cx="169.7" cy="1367" r="6.1" fill="#2b6cc4"/>
<circle cx="600" cy="288" r="13.5" stroke="#6a6e76" stroke-width="2.6" stroke-linecap="round" stroke-linejoin="round" fill="none" /><path d="M610.04585 298.04585L617.01 305.01" stroke="#6a6e76" stroke-width="2.6" stroke-linecap="round" stroke-linejoin="round" fill="none" />
<circle cx="2275.4" cy="290" r="2.7" stroke="#1f242c" stroke-width="2.3" stroke-linecap="round" stroke-linejoin="round" fill="none" /><circle cx="2286" cy="290" r="2.7" stroke="#1f242c" stroke-width="2.3" stroke-linecap="round" stroke-linejoin="round" fill="none" /><circle cx="2296.6" cy="290" r="2.7" stroke="#1f242c" stroke-width="2.3" stroke-linecap="round" stroke-linejoin="round" fill="none" />
<text x="2357.9" y="294.3" font-family="Liberation Serif,serif" font-style="italic" font-weight="700" font-size="29" fill="#1f242c">x</text><path d="M2353.7 300.3h24.6M2373.9 296.3l4.6 4l-4.6 4" stroke="#1f242c" stroke-width="2.3" stroke-linecap="round" stroke-linejoin="round" fill="none" />
<rect x="2445.3" y="277.90000000000003" width="10.4" height="5.3" rx="2.65" stroke="#1f242c" stroke-width="2.3" stroke-linecap="round" stroke-linejoin="round" fill="none" /><path d="M2455.7 280.2h1.4a3.2 3.2 0 0 1 3.2 3.2v15.8a2.8 2.8 0 0 1 -2.8 2.8h-25.2v-1.6c1 -8 6.4 -12.6 14.4 -12.9h14" stroke="#1f242c" stroke-width="2.3" stroke-linecap="round" stroke-linejoin="round" fill="none" /><path d="M2433.6 296.40000000000003h26.4" stroke="#1f242c" stroke-width="2.3" stroke-linecap="round" stroke-linejoin="round" fill="none" /><circle cx="2451.6" cy="293.2" r="1.3" fill="#1f242c"/><circle cx="2455.9" cy="293.2" r="1.3" fill="#1f242c"/>
<path d="M2513.6 277.9l6.8 6.8m0 -6.8l-6.8 6.8" stroke="#127f8f" stroke-width="2.2" stroke-linecap="round" stroke-linejoin="round" fill="none" /><circle cx="2537" cy="285.5" r="3.1" stroke="#127f8f" stroke-width="1.9" stroke-linecap="round" stroke-linejoin="round" fill="none" /><circle cx="2528.8" cy="293" r="3.1" stroke="#127f8f" stroke-width="1.9" stroke-linecap="round" stroke-linejoin="round" fill="none" /><circle cx="2521.5" cy="300.6" r="3.1" stroke="#127f8f" stroke-width="1.9" stroke-linecap="round" stroke-linejoin="round" fill="none" />
<path d="M2606.0 275.0L2606.6 275.0L2607.2 275.1L2607.7 275.3L2608.2 276.0L2608.5 277.5L2608.6 279.0L2608.9 279.7L2609.3 280.0L2609.6 280.1L2610.0 280.3L2610.4 280.5L2610.8 280.6L2611.2 280.6L2611.9 280.4L2613.1 279.4L2614.3 278.5L2615.2 278.4L2615.7 278.6L2616.2 279.0L2616.6 279.4L2617.0 279.8L2617.4 280.3L2617.6 280.8L2617.5 281.7L2616.6 282.9L2615.6 284.1L2615.4 284.8L2615.4 285.2L2615.5 285.6L2615.7 286.0L2615.9 286.4L2616.0 286.7L2616.3 287.1L2617.0 287.4L2618.5 287.5L2620.0 287.8L2620.7 288.3L2620.9 288.8L2621.0 289.4L2621.0 290.0L2621.0 290.6L2620.9 291.2L2620.7 291.7L2620.0 292.2L2618.5 292.5L2617.0 292.6L2616.3 292.9L2616.0 293.3L2615.9 293.6L2615.7 294.0L2615.5 294.4L2615.4 294.8L2615.4 295.2L2615.6 295.9L2616.6 297.1L2617.5 298.3L2617.6 299.2L2617.4 299.7L2617.0 300.2L2616.6 300.6L2616.2 301.0L2615.7 301.4L2615.2 301.6L2614.3 301.5L2613.1 300.6L2611.9 299.6L2611.2 299.4L2610.8 299.4L2610.4 299.5L2610.0 299.7L2609.6 299.9L2609.3 300.0L2608.9 300.3L2608.6 301.0L2608.5 302.5L2608.2 304.0L2607.7 304.7L2607.2 304.9L2606.6 305.0L2606.0 305.0L2605.4 305.0L2604.8 304.9L2604.3 304.7L2603.8 304.0L2603.5 302.5L2603.4 301.0L2603.1 300.3L2602.7 300.0L2602.4 299.9L2602.0 299.7L2601.6 299.5L2601.2 299.4L2600.8 299.4L2600.1 299.6L2598.9 300.6L2597.7 301.5L2596.8 301.6L2596.3 301.4L2595.8 301.0L2595.4 300.6L2595.0 300.2L2594.6 299.7L2594.4 299.2L2594.5 298.3L2595.4 297.1L2596.4 295.9L2596.6 295.2L2596.6 294.8L2596.5 294.4L2596.3 294.0L2596.1 293.6L2596.0 293.3L2595.7 292.9L2595.0 292.6L2593.5 292.5L2592.0 292.2L2591.3 291.7L2591.1 291.2L2591.0 290.6L2591.0 290.0L2591.0 289.4L2591.1 288.8L2591.3 288.3L2592.0 287.8L2593.5 287.5L2595.0 287.4L2595.7 287.1L2596.0 286.7L2596.1 286.4L2596.3 286.0L2596.5 285.6L2596.6 285.2L2596.6 284.8L2596.4 284.1L2595.4 282.9L2594.5 281.7L2594.4 280.8L2594.6 280.3L2595.0 279.8L2595.4 279.4L2595.8 279.0L2596.3 278.6L2596.8 278.4L2597.7 278.5L2598.9 279.4L2600.1 280.4L2600.8 280.6L2601.2 280.6L2601.6 280.5L2602.0 280.3L2602.4 280.1L2602.7 280.0L2603.1 279.7L2603.4 279.0L2603.5 277.5L2603.8 276.0L2604.3 275.3L2604.8 275.1L2605.4 275.0Z" stroke="#1f242c" stroke-width="2.6" stroke-linecap="round" stroke-linejoin="round" fill="none" /><circle cx="2606" cy="290" r="3.67" stroke="#1f242c" stroke-width="2.6" stroke-linecap="round" stroke-linejoin="round" fill="none" />
<path d="M2679.5 290h25.0M2692 277.5v25.0" stroke="#1f242c" stroke-width="2.4" stroke-linecap="round" stroke-linejoin="round" fill="none" />
<path d="M2946.5 290h25.0M2959 277.5v25.0" stroke="#ffffff" stroke-width="2.4" stroke-linecap="round" stroke-linejoin="round" fill="none" />
<path d="M530 405l9 9l9 -9" stroke="#7d8086" stroke-width="2.4" stroke-linecap="round" stroke-linejoin="round" fill="none" />
<circle cx="2644.4" cy="405" r="2.7" stroke="#1f242c" stroke-width="2.3" stroke-linecap="round" stroke-linejoin="round" fill="none" /><circle cx="2655" cy="405" r="2.7" stroke="#1f242c" stroke-width="2.3" stroke-linecap="round" stroke-linejoin="round" fill="none" /><circle cx="2665.6" cy="405" r="2.7" stroke="#1f242c" stroke-width="2.3" stroke-linecap="round" stroke-linejoin="round" fill="none" />
<path d="M2728.35 391.4L2716.95 401.9Q2726.95 403.6 2727.45 414.4L2739.55 403.1Q2728.95 401.8 2728.35 391.4Z" stroke="#1f242c" stroke-width="2.3" stroke-linecap="round" stroke-linejoin="round" fill="none" /><path d="M2734.2 409L2741.4 416.3" stroke="#1f242c" stroke-width="2.3" stroke-linecap="round" stroke-linejoin="round" fill="none" />
<text x="2803.4" y="409.3" font-family="Liberation Serif,serif" font-style="italic" font-weight="700" font-size="29" fill="#1f242c">x</text><path d="M2799.2 415.3h24.6M2819.4 411.3l4.6 4l-4.6 4" stroke="#1f242c" stroke-width="2.3" stroke-linecap="round" stroke-linejoin="round" fill="none" />
<rect x="2890.05" y="393.40000000000003" width="10.4" height="5.3" rx="2.65" stroke="#1f242c" stroke-width="2.3" stroke-linecap="round" stroke-linejoin="round" fill="none" /><path d="M2900.45 395.7h1.4a3.2 3.2 0 0 1 3.2 3.2v15.8a2.8 2.8 0 0 1 -2.8 2.8h-25.2v-1.6c1 -8 6.4 -12.6 14.4 -12.9h14" stroke="#1f242c" stroke-width="2.3" stroke-linecap="round" stroke-linejoin="round" fill="none" /><path d="M2878.35 411.90000000000003h26.4" stroke="#1f242c" stroke-width="2.3" stroke-linecap="round" stroke-linejoin="round" fill="none" /><circle cx="2896.35" cy="408.7" r="1.3" fill="#1f242c"/><circle cx="2900.65" cy="408.7" r="1.3" fill="#1f242c"/>
<path d="M2960.5 405.5h25.0M2973 393.0v25.0" stroke="#1f242c" stroke-width="2.4" stroke-linecap="round" stroke-linejoin="round" fill="none" />
<path d="M530 1144.5l9 9l9 -9" stroke="#7d8086" stroke-width="2.4" stroke-linecap="round" stroke-linejoin="round" fill="none" />
<circle cx="2644.4" cy="1144.5" r="2.7" stroke="#1f242c" stroke-width="2.3" stroke-linecap="round" stroke-linejoin="round" fill="none" /><circle cx="2655" cy="1144.5" r="2.7" stroke="#1f242c" stroke-width="2.3" stroke-linecap="round" stroke-linejoin="round" fill="none" /><circle cx="2665.6" cy="1144.5" r="2.7" stroke="#1f242c" stroke-width="2.3" stroke-linecap="round" stroke-linejoin="round" fill="none" />
<path d="M2728.35 1130.9L2716.95 1141.4Q2726.95 1143.1 2727.45 1153.9L2739.55 1142.6Q2728.95 1141.3 2728.35 1130.9Z" stroke="#1f242c" stroke-width="2.3" stroke-linecap="round" stroke-linejoin="round" fill="none" /><path d="M2734.2 1148.5L2741.4 1155.8" stroke="#1f242c" stroke-width="2.3" stroke-linecap="round" stroke-linejoin="round" fill="none" />
<text x="2803.4" y="1148.8" font-family="Liberation Serif,serif" font-style="italic" font-weight="700" font-size="29" fill="#1f242c">x</text><path d="M2799.2 1154.8h24.6M2819.4 1150.8l4.6 4l-4.6 4" stroke="#1f242c" stroke-width="2.3" stroke-linecap="round" stroke-linejoin="round" fill="none" />
<rect x="2890.05" y="1132.8999999999999" width="10.4" height="5.3" rx="2.65" stroke="#1f242c" stroke-width="2.3" stroke-linecap="round" stroke-linejoin="round" fill="none" /><path d="M2900.45 1135.2h1.4a3.2 3.2 0 0 1 3.2 3.2v15.8a2.8 2.8 0 0 1 -2.8 2.8h-25.2v-1.6c1 -8 6.4 -12.6 14.4 -12.9h14" stroke="#1f242c" stroke-width="2.3" stroke-linecap="round" stroke-linejoin="round" fill="none" /><path d="M2878.35 1151.3999999999999h26.4" stroke="#1f242c" stroke-width="2.3" stroke-linecap="round" stroke-linejoin="round" fill="none" /><circle cx="2896.35" cy="1148.2" r="1.3" fill="#1f242c"/><circle cx="2900.65" cy="1148.2" r="1.3" fill="#1f242c"/>
<path d="M2960.5 1145.0h25.0M2973 1132.5v25.0" stroke="#1f242c" stroke-width="2.4" stroke-linecap="round" stroke-linejoin="round" fill="none" />
<path d="M668 641.75H1348" stroke="#ececef" stroke-width="1.6"/><path d="M644 641.75H668" stroke="#dedee2" stroke-width="2"/><path d="M668 697H1348" stroke="#ececef" stroke-width="1.6"/><path d="M644 697H668" stroke="#dedee2" stroke-width="2"/><path d="M668 752.25H1348" stroke="#ececef" stroke-width="1.6"/><path d="M644 752.25H668" stroke="#dedee2" stroke-width="2"/><path d="M668 807.5H1348" stroke="#ececef" stroke-width="1.6"/><path d="M644 807.5H668" stroke="#dedee2" stroke-width="2"/><path d="M668 862.5H1348" stroke="#ececef" stroke-width="1.6"/><path d="M644 862.5H668" stroke="#dedee2" stroke-width="2"/><path d="M668 917.75H1348" stroke="#ececef" stroke-width="1.6"/><path d="M644 917.75H668" stroke="#dedee2" stroke-width="2"/><path d="M656 598V953.7" stroke="#e1e1e5" stroke-width="3.4"/><path d="M654.3 952.2H1349" stroke="#e1e1e5" stroke-width="3.2"/><path d="M656.0 952V963.5" stroke="#e1e1e5" stroke-width="2.7"/><path d="M794.4 940.25V963.5" stroke="#e1e1e5" stroke-width="2.7"/><path d="M932.8 940.25V963.5" stroke="#e1e1e5" stroke-width="2.7"/><path d="M1071.2 940.25V963.5" stroke="#e1e1e5" stroke-width="2.7"/><path d="M1209.6 940.25V963.5" stroke="#e1e1e5" stroke-width="2.7"/><path d="M1348.0 940.25V963.5" stroke="#e1e1e5" stroke-width="2.7"/><clipPath id="c1"><rect x="656" y="598" width="694" height="354"/></clipPath><g clip-path="url(#c1)"><path d="M654.5 569.6C656.5 571.9 662.5 578.8 666.5 583.6C670.5 588.4 674.5 593.1 678.5 598.2C682.5 603.3 686.5 608.5 690.5 614.3C694.5 620.1 698.5 626.3 702.5 632.8C706.5 639.3 710.5 646.2 714.5 653.2C718.5 660.2 722.5 667.5 726.5 674.7C730.5 681.9 734.5 689.3 738.5 696.5C742.5 703.7 746.5 710.8 750.5 717.8C754.5 724.8 758.5 731.6 762.5 738.2C766.5 744.8 770.5 751.2 774.5 757.3C778.5 763.4 782.5 769.2 786.5 774.7C790.5 780.2 794.5 785.3 798.5 790.2C802.5 795.1 806.5 799.7 810.5 803.9C814.5 808.1 818.5 811.9 822.5 815.5C826.5 819.1 830.5 822.3 834.5 825.5C838.5 828.7 842.5 831.6 846.5 834.5C850.5 837.4 854.5 840.2 858.5 842.9C862.5 845.6 866.5 848.2 870.5 850.7C874.5 853.2 878.5 855.6 882.5 857.9C886.5 860.2 891.6 863.0 894.5 864.6C897.4 866.2 894.1 864.7 900.0 867.5C905.9 870.3 920.0 877.2 930.0 881.5C940.0 885.8 950.0 889.5 960.0 893.0C970.0 896.5 980.0 899.5 990.0 902.4C1000.0 905.3 1010.0 907.8 1020.0 910.2C1030.0 912.6 1040.0 914.9 1050.0 917.0C1060.0 919.1 1070.0 921.1 1080.0 923.1C1090.0 925.1 1100.0 927.0 1110.0 928.8C1120.0 930.6 1130.0 932.4 1140.0 934.1C1150.0 935.8 1160.0 937.4 1170.0 938.9C1180.0 940.4 1190.0 941.9 1200.0 943.3C1210.0 944.7 1220.0 945.9 1230.0 947.1C1240.0 948.3 1250.0 949.5 1260.0 950.5C1270.0 951.5 1280.0 952.5 1290.0 953.4C1300.0 954.3 1310.0 955.0 1320.0 955.7C1330.0 956.4 1345.0 957.2 1350.0 957.5C1355.0 957.8 1350.0 957.5 1350.0 957.5" stroke="#35894f" stroke-width="2.8" fill="none"/><path d="M664.5 569.0C666.5 571.5 672.5 579.3 676.5 584.3C680.5 589.3 684.5 593.8 688.5 598.9C692.5 604.0 696.5 609.1 700.5 614.9C704.5 620.7 708.5 627.1 712.5 633.8C716.5 640.4 720.5 647.6 724.5 654.8C728.5 662.0 732.5 669.6 736.5 677.0C740.5 684.4 744.5 692.0 748.5 699.3C752.5 706.6 756.5 713.9 760.5 720.8C764.5 727.7 768.5 734.4 772.5 740.8C776.5 747.1 780.5 753.1 784.5 758.9C788.5 764.7 792.5 770.2 796.5 775.4C800.5 780.6 804.5 785.6 808.5 790.3C812.5 795.0 816.5 799.4 820.5 803.6C824.5 807.8 828.5 811.7 832.5 815.4C836.5 819.1 840.5 822.5 844.5 825.8C848.5 829.1 852.5 832.1 856.5 835.0C860.5 837.9 864.5 840.6 868.5 843.2C872.5 845.8 876.5 848.2 880.5 850.5C884.5 852.8 889.2 855.3 892.5 857.0C895.8 858.7 893.8 857.9 900.0 860.8C906.2 863.7 920.0 870.1 930.0 874.2C940.0 878.3 950.0 882.0 960.0 885.5C970.0 889.0 980.0 892.1 990.0 895.0C1000.0 897.9 1010.0 900.5 1020.0 903.0C1030.0 905.5 1040.0 907.9 1050.0 910.1C1060.0 912.4 1070.0 914.4 1080.0 916.5C1090.0 918.6 1100.0 920.6 1110.0 922.5C1120.0 924.4 1130.0 926.2 1140.0 928.0C1150.0 929.8 1160.0 931.4 1170.0 933.0C1180.0 934.6 1190.0 936.1 1200.0 937.5C1210.0 938.9 1220.0 940.2 1230.0 941.5C1240.0 942.8 1250.0 944.0 1260.0 945.1C1270.0 946.2 1280.0 947.2 1290.0 948.1C1300.0 949.0 1310.0 949.9 1320.0 950.7C1330.0 951.5 1345.0 952.4 1350.0 952.7C1355.0 953.0 1350.0 952.7 1350.0 952.7" stroke="#c25fc8" stroke-width="2.8" fill="none"/></g><clipPath id="c1b"><rect x="1340" y="952" width="20" height="20"/></clipPath><g clip-path="url(#c1b)"><circle cx="1348.2" cy="956.5" r="5" fill="#c25fc8"/><circle cx="1348" cy="960" r="5" fill="#62ab7b"/></g><path d="M1347.9 952v12" stroke="#9a9fa8" stroke-width="1.4"/>
<path d="M2430 647.3H3104.2" stroke="#ececef" stroke-width="1.6"/><path d="M2406 647.3H2430" stroke="#dedee2" stroke-width="2"/><path d="M2430 727H3104.2" stroke="#ececef" stroke-width="1.6"/><path d="M2406 727H2430" stroke="#dedee2" stroke-width="2"/><path d="M2430 806.9H3104.2" stroke="#ececef" stroke-width="1.6"/><path d="M2406 806.9H2430" stroke="#dedee2" stroke-width="2"/><path d="M2430 887.1H3104.2" stroke="#ececef" stroke-width="1.6"/><path d="M2406 887.1H2430" stroke="#dedee2" stroke-width="2"/><path d="M2418.2 598.5V963" stroke="#e1e1e5" stroke-width="3.4"/><path d="M2416.5 951.2H3105.2" stroke="#e1e1e5" stroke-width="3.2"/><path d="M2416.5 966.8H3105.2" stroke="#e1e1e5" stroke-width="3.2"/><path d="M2555.3999999999996 940.5V963.5" stroke="#e1e1e5" stroke-width="2.7"/><path d="M2692.6 940.5V963.5" stroke="#e1e1e5" stroke-width="2.7"/><path d="M2829.7999999999997 940.5V963.5" stroke="#e1e1e5" stroke-width="2.7"/><path d="M2967.0 940.5V963.5" stroke="#e1e1e5" stroke-width="2.7"/><path d="M3104.2 940.5V963.5" stroke="#e1e1e5" stroke-width="2.7"/><clipPath id="c3"><rect x="2418" y="598.5" width="690" height="352.5"/></clipPath><path clip-path="url(#c3)" d="M2437.1 955.4L3061.4 594" stroke="#35894f" stroke-width="2.8" fill="none"/>
<path d="M1517 603.7V615.5" stroke="#8e9196" stroke-width="1.8"/><path d="M1524.5 600.0V615.5" stroke="#8e9196" stroke-width="1.8"/><path d="M1532.5 595.5V615.5" stroke="#8e9196" stroke-width="1.8"/><path d="M1540.2 587.5V615.5" stroke="#8e9196" stroke-width="1.8"/>
<path d="M1842 598.75l8.4 8l8.4 -8" stroke="#21252c" stroke-width="2.4" stroke-linecap="round" stroke-linejoin="round" fill="none" />
<path d="M1845.1 671.3L1845.9 671.3L1846.7 671.4L1847.4 671.7L1848.1 672.6L1848.4 674.7L1848.7 676.7L1849.0 677.6L1849.5 678.0L1850.0 678.2L1850.5 678.4L1851.0 678.6L1851.6 678.8L1852.2 678.9L1853.1 678.5L1854.6 677.2L1856.3 676.0L1857.4 675.9L1858.2 676.2L1858.8 676.7L1859.4 677.2L1859.9 677.8L1860.4 678.4L1860.7 679.2L1860.6 680.3L1859.4 682.0L1858.1 683.5L1857.7 684.4L1857.8 685.0L1858.0 685.6L1858.2 686.1L1858.4 686.6L1858.6 687.1L1859.0 687.6L1859.9 687.9L1861.9 688.2L1864.0 688.5L1864.9 689.2L1865.2 689.9L1865.3 690.7L1865.3 691.5L1865.3 692.3L1865.2 693.1L1864.9 693.8L1864.0 694.5L1861.9 694.8L1859.9 695.1L1859.0 695.4L1858.6 695.9L1858.4 696.4L1858.2 696.9L1858.0 697.4L1857.8 698.0L1857.7 698.6L1858.1 699.5L1859.4 701.0L1860.6 702.7L1860.7 703.8L1860.4 704.6L1859.9 705.2L1859.4 705.8L1858.8 706.3L1858.2 706.8L1857.4 707.1L1856.3 707.0L1854.6 705.8L1853.1 704.5L1852.2 704.1L1851.6 704.2L1851.0 704.4L1850.5 704.6L1850.0 704.8L1849.5 705.0L1849.0 705.4L1848.7 706.3L1848.4 708.3L1848.1 710.4L1847.4 711.3L1846.7 711.6L1845.9 711.7L1845.1 711.7L1844.3 711.7L1843.5 711.6L1842.8 711.3L1842.1 710.4L1841.8 708.3L1841.5 706.3L1841.2 705.4L1840.7 705.0L1840.2 704.8L1839.7 704.6L1839.2 704.4L1838.6 704.2L1838.0 704.1L1837.1 704.5L1835.6 705.8L1833.9 707.0L1832.8 707.1L1832.0 706.8L1831.4 706.3L1830.8 705.8L1830.3 705.2L1829.8 704.6L1829.5 703.8L1829.6 702.7L1830.8 701.0L1832.1 699.5L1832.5 698.6L1832.4 698.0L1832.2 697.4L1832.0 696.9L1831.8 696.4L1831.6 695.9L1831.2 695.4L1830.3 695.1L1828.3 694.8L1826.2 694.5L1825.3 693.8L1825.0 693.1L1824.9 692.3L1824.9 691.5L1824.9 690.7L1825.0 689.9L1825.3 689.2L1826.2 688.5L1828.3 688.2L1830.3 687.9L1831.2 687.6L1831.6 687.1L1831.8 686.6L1832.0 686.1L1832.2 685.6L1832.4 685.0L1832.5 684.4L1832.1 683.5L1830.8 682.0L1829.6 680.3L1829.5 679.2L1829.8 678.4L1830.3 677.8L1830.8 677.2L1831.4 676.7L1832.0 676.2L1832.8 675.9L1833.9 676.0L1835.6 677.2L1837.1 678.5L1838.0 678.9L1838.6 678.8L1839.2 678.6L1839.7 678.4L1840.2 678.2L1840.7 678.0L1841.2 677.6L1841.5 676.7L1841.8 674.7L1842.1 672.6L1842.8 671.7L1843.5 671.4L1844.3 671.3Z" stroke="#4a4e55" stroke-width="2.1" stroke-linecap="round" stroke-linejoin="round" fill="none" /><circle cx="1845.1" cy="691.5" r="4.95" stroke="#4a4e55" stroke-width="2.1" stroke-linecap="round" stroke-linejoin="round" fill="none" />
<path d="M2081.2 672.2L2083.6 678.3L2089.3 681.3L2084.3 685.4L2083.1 691.8L2077.7 688.3L2071.3 689.1L2072.9 682.9L2070.1 677.1L2076.6 676.7Z" stroke="#3f444b" stroke-width="2" stroke-linecap="round" stroke-linejoin="round" fill="none" /><path d="M2071.6 690.6L2056.6 706.4" stroke="#3f444b" stroke-width="2.2" stroke-linecap="round" stroke-linejoin="round" fill="none" /><path d="M2055.7 683.0999999999999q0 4.2 4.2 4.2q-4.2 0 -4.2 4.2q0 -4.2 -4.2 -4.2q4.2 0 4.2 -4.2z" fill="#3f444b"/><path d="M2085 701.5999999999999q0 3.2 3.2 3.2q-3.2 0 -3.2 3.2q0 -3.2 -3.2 -3.2q3.2 0 3.2 -3.2z" fill="#3f444b"/><path d="M2063 671.3q0 2.2 2.2 2.2q-2.2 0 -2.2 2.2q0 -2.2 -2.2 -2.2q2.2 0 2.2 -2.2z" fill="#3f444b"/>
<circle cx="1913.75" cy="805.5" r="9.6" stroke="#2a2e35" stroke-width="1.8" stroke-linecap="round" stroke-linejoin="round" fill="none" /><text x="1910.85" y="811.5" font-family="Liberation Serif,serif" font-style="italic" font-weight="700" font-size="17" fill="#2a2e35">i</text>
<path d="M1949.8000000000002 794.6v15M1942.8000000000002 804.2l7 7l7 -7" stroke="#3a3e45" stroke-width="3.7" stroke-linecap="butt" stroke-linejoin="miter" fill="none" />
<rect x="1850.5" y="1371" width="12.6" height="14.6" rx="2" stroke="#1a8fa0" stroke-width="2.5" stroke-linecap="round" stroke-linejoin="round" fill="none" /><rect x="1869.8" y="1357.8" width="12" height="27.8" rx="2" stroke="#1a8fa0" stroke-width="2.5" stroke-linecap="round" stroke-linejoin="round" fill="none" /><path d="M1848 1391.2h36.5" stroke="#1a8fa0" stroke-width="2.5" stroke-linecap="round" stroke-linejoin="round" fill="none" />
<path d="M62 1653.6L72.7 1662.4L83.4 1653.6L87.5 1666.6L72.7 1679.6L58.1 1666.6Z" stroke="#ffffff" stroke-width="2" stroke-linecap="round" stroke-linejoin="round" fill="none" /><path d="M62 1653.6L67.6 1668.2L72.7 1679.6L77.8 1668.2L83.4 1653.6M58.1 1666.6L67.6 1668.2M87.5 1666.6L77.8 1668.2M66.2 1662.6H79.2M66.2 1662.6L72.7 1672.6L79.2 1662.6" stroke="#ffffff" stroke-width="1.3" stroke-linecap="round" stroke-linejoin="round" fill="none" /></svg>
</div></body></html>
